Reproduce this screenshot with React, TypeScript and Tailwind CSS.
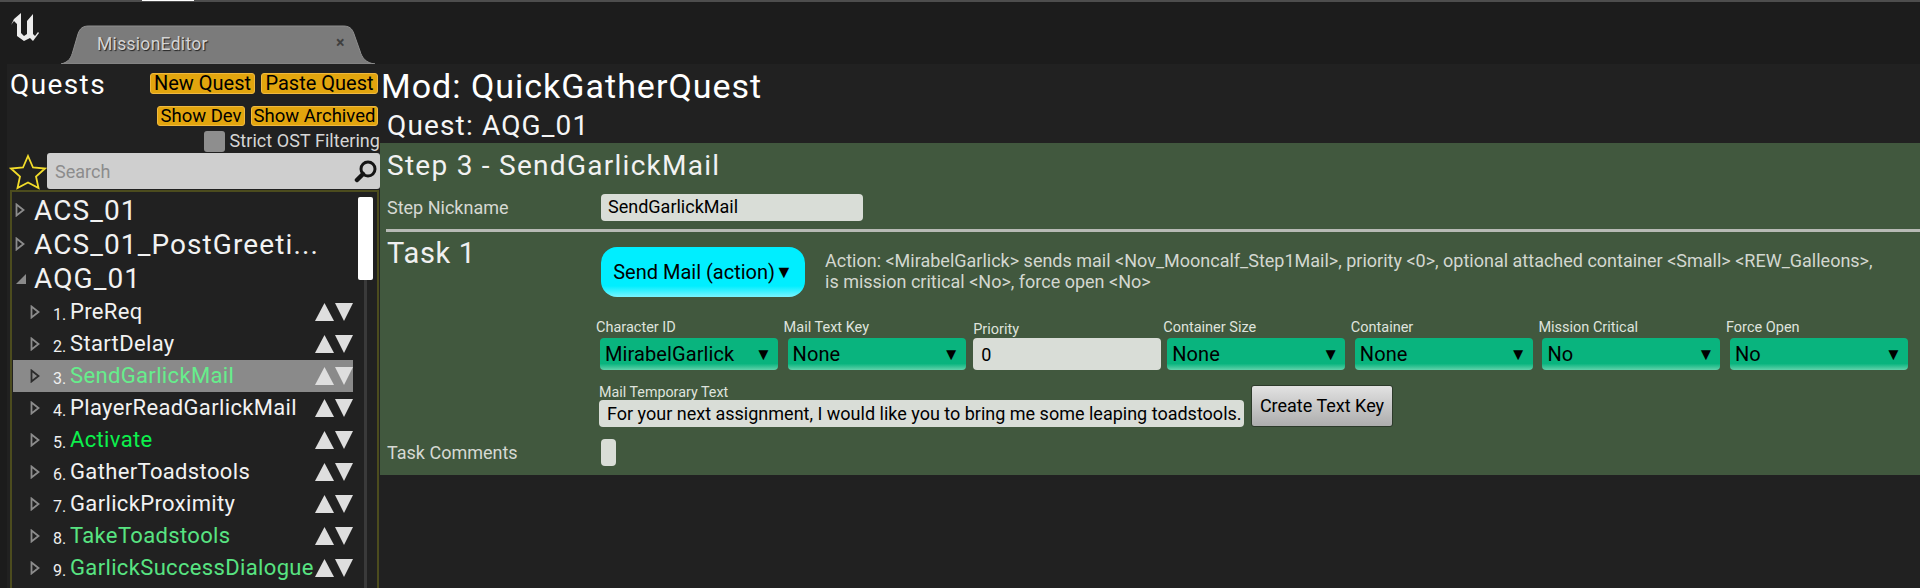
import React from 'react';

const steps = [
  { n: 1, name: 'PreReq', color: 'text-[#f2f2f2]' },
  { n: 2, name: 'StartDelay', color: 'text-[#f2f2f2]' },
  { n: 3, name: 'SendGarlickMail', color: 'text-[#66ee8c]', selected: true },
  { n: 4, name: 'PlayerReadGarlickMail', color: 'text-[#f2f2f2]' },
  { n: 5, name: 'Activate', color: 'text-[#0cf04c]' },
  { n: 6, name: 'GatherToadstools', color: 'text-[#f2f2f2]' },
  { n: 7, name: 'GarlickProximity', color: 'text-[#f2f2f2]' },
  { n: 8, name: 'TakeToadstools', color: 'text-[#58e481]' },
  { n: 9, name: 'GarlickSuccessDialogue', color: 'text-[#58e481]' },
];

const fields = [
  { label: 'Character ID', value: 'MirabelGarlick' },
  { label: 'Mail Text Key', value: 'None' },
  { label: 'Priority', value: '0', input: true },
  { label: 'Container Size', value: 'None' },
  { label: 'Container', value: 'None' },
  { label: 'Mission Critical', value: 'No' },
  { label: 'Force Open', value: 'No' },
];

const OrangeButton = ({ label, className }: { label: string; className: string }) => (
  <div className={`flex items-center justify-center rounded-[3px] border border-[#f0b93f] bg-[#e2a50e] leading-none text-black ${className}`}>
    {label}
  </div>
);

const Caret = ({ open, dark }: { open?: boolean; dark?: boolean }) =>
  open ? (
    <svg width="12" height="12" viewBox="0 0 12 12" className="shrink-0">
      <path d="M1 11 L11 1 L11 11 Z" fill="#8a8a8a" />
    </svg>
  ) : (
    <svg width="10" height="14" viewBox="0 0 10 14" className="shrink-0">
      <path d="M1.5 1.5 L8.5 7 L1.5 12.5 Z" fill="none" stroke={dark ? '#2c2c2c' : '#8c8c8c'} strokeWidth="1.8" />
    </svg>
  );

const MoveArrows = () => (
  <div className="flex shrink-0 gap-px">
    <svg width="19" height="18" viewBox="0 0 19 18">
      <path d="M9.5 0 L19 18 L0 18 Z" fill="#dedede" />
    </svg>
    <svg width="18" height="18" viewBox="0 0 18 18">
      <path d="M0 0 L18 0 L9 18 Z" fill="#dedede" />
    </svg>
  </div>
);

const TreeRoot = ({ label, open }: { label: string; open?: boolean }) => (
  <div className="flex h-[34.4px] items-center">
    <div className="flex w-[21px] justify-start pl-[2px]">
      <Caret open={open} />
    </div>
    <span className="mt-[1px] text-[28px] leading-none tracking-[1.1px] text-[#f2f2f2]">{label}</span>
  </div>
);

const StepRow = ({ n, name, color, selected }: { n: number; name: string; color: string; selected?: boolean }) => (
  <div className={`flex h-[32px] items-center ${selected ? 'bg-[#8a8a8a]' : ''}`}>
    <div className="flex w-[40px] justify-end pr-[13px] pl-[17px]">
      <Caret dark={selected} />
    </div>
    <span className="mt-[5px] w-[17px] text-[16px] leading-none text-[#f0f0f0]">{n}.</span>
    <span className={`min-w-0 flex-1 whitespace-nowrap text-[22px] leading-none tracking-[0.35px] ${color}`}>{name}</span>
    <MoveArrows />
  </div>
);

const Sidebar = () => (
  <div className="flex w-[373px] shrink-0 flex-col">
    <div className="flex h-[35px] items-center pt-[3px]">
      <span className="mt-[4px] ml-[3px] text-[28px] leading-none tracking-[1.4px] text-white">Quests</span>
      <OrangeButton label="New Quest" className="ml-auto h-[21px] w-[105px] text-[20px]" />
      <OrangeButton label="Paste Quest" className="mr-[2px] ml-[6px] h-[21px] w-[117px] text-[20px]" />
    </div>
    <div className="mt-[7px] flex h-[24px] justify-end pr-[2px]">
      <OrangeButton label="Show Dev" className="h-[20px] w-[88px] text-[18.5px]" />
      <OrangeButton label="Show Archived" className="ml-[6px] h-[20px] w-[127px] text-[18.5px]" />
    </div>
    <div className="flex h-[23px] items-center justify-end">
      <div className="h-[21px] w-[21px] rounded-[3px] bg-[#8e8e8e]" />
      <span className="ml-[5px] text-[18px] leading-none tracking-[0.05px] whitespace-nowrap text-[#d6d6d6]">Strict OST Filtering</span>
    </div>
    <div className="flex h-[37px] items-center">
      <svg width="38" height="37" viewBox="0 0 38 37" className="ml-[2px] shrink-0">
        <path
          d="M19 3 L24 14.5 L36 15.5 L27 23.5 L29.5 35 L19 29.5 L8.5 35 L11 23.5 L2 15.5 L14 14.5 Z"
          fill="none"
          stroke="#f2dc2a"
          strokeWidth="1.8"
        />
      </svg>
      <div className="flex h-[36px] flex-1 items-center justify-between rounded-[3px] bg-[#cfcfcf] pr-[2px] pl-[8px]">
        <span className="text-[18px] text-[#8c8c8c]">Search</span>
        <svg width="24" height="24" viewBox="0 0 24 24">
          <circle cx="14" cy="10" r="7" fill="none" stroke="#151515" strokeWidth="3" />
          <path d="M9 15 L3 21" stroke="#151515" strokeWidth="4.5" strokeLinecap="round" />
        </svg>
      </div>
    </div>
    <div className="relative mr-[1px] ml-[3px] h-[399px] overflow-hidden border-x-2 border-t-2 border-[#4c4c1e] pt-[1px] pl-px">
      <div className="absolute top-[5px] right-[4px] h-[83px] w-[15px] rounded-[2px] bg-white" />
      <div className="absolute top-[88px] right-[10px] bottom-0 w-[3px] bg-[#3a3a3a]" />
      <div className="w-[340px]">
        <TreeRoot label="ACS_01" />
        <TreeRoot label="ACS_01_PostGreeti..." />
        <TreeRoot label="AQG_01" open />
        {steps.map((s) => (
          <StepRow key={s.n} {...s} />
        ))}
      </div>
    </div>
  </div>
);

const Combo = ({ value }: { value: string }) => (
  <div className="flex h-[32px] items-center justify-between rounded-[4px] bg-[linear-gradient(#09b47e_80%,#62d2ab)] pr-[6px] pl-[5px] text-[20px] leading-none tracking-[0.1px] text-black">
    <span>{value}</span>
    <span className="text-[17px]">▼</span>
  </div>
);

const FieldCol = ({ label, value, input }: { label: string; value: string; input?: boolean }) => (
  <div className={`flex shrink-0 flex-col ${input ? 'w-[192px]' : 'w-[187.6px]'}`}>
    <div className={`flex h-[35px] text-[14.5px] leading-none text-[#dfe3dd] ${input ? 'items-end pb-[1px] pl-[2px]' : 'items-start pt-[18px]'}`}>
      {label}
    </div>
    <div className="ml-[4px] w-[178px]">
      {input ? (
        <div className="-ml-[2px] flex h-[32px] w-[188px] items-center rounded-[4px] bg-[#d9ddd7] pl-[8px] text-[18px] text-black">{value}</div>
      ) : (
        <Combo value={value} />
      )}
    </div>
  </div>
);

const MainPanel = () => (
  <div className="flex min-w-0 flex-1 flex-col">
    <div className="flex h-[41px] items-center pt-[3px] pl-[1px] text-[34px] leading-none tracking-[1px] text-white">Mod: QuickGatherQuest</div>
    <div className="flex h-[38px] items-center pt-[3px] pl-[7px] text-[28px] leading-none tracking-[1.15px] text-[#f5f5f5]">Quest: AQG_01</div>
    <div className="flex h-[332px] flex-col bg-[#41583e]">
      <div className="flex h-[46px] items-center pl-[7px] text-[28px] leading-none tracking-[1.27px] text-[#f2f2f2]">Step 3 - SendGarlickMail</div>
      <div className="flex h-[36px] items-center pl-[7px]">
        <span className="mt-[2px] w-[214px] text-[18px] leading-none text-[#d6d9d3]">Step Nickname</span>
        <div className="flex h-[27px] w-[262px] items-center rounded-[4px] bg-[#d9ddd7] pl-[7px] text-[18px] leading-none text-black">SendGarlickMail</div>
      </div>
      <div className="mt-[4px] ml-[6px] h-[3px] bg-[#b7bab5]" />
      <div className="flex h-[65px] pt-[15px] pl-[7px]">
        <span className="-mt-[11px] w-[214px] text-[29px] leading-[34px] tracking-[0.7px] text-[#f0f0f0]">Task 1</span>
        <div className="flex h-[50px] w-[204px] items-center justify-center rounded-[16px] bg-[linear-gradient(#00eeff_78%,#7af4ff)] text-[20px] leading-none text-black">
          Send Mail (action)<span className="text-[18px]">▼</span>
        </div>
        <p className="mt-[3px] ml-[20px] w-[1080px] text-[18px] leading-[21px] text-[#d3d7d0]">
          Action: &lt;MirabelGarlick&gt; sends mail &lt;Nov_Mooncalf_Step1Mail&gt;, priority &lt;0&gt;, optional attached container &lt;Small&gt; &lt;REW_Galleons&gt;,
          <br />
          is mission critical &lt;No&gt;, force open &lt;No&gt;
        </p>
      </div>
      <div className="mt-[6px] flex pl-[216px]">
        {fields.map((f) => (
          <FieldCol key={f.label} {...f} />
        ))}
      </div>
      <div className="mt-[15px] flex items-end pl-[219px]">
        <div className="w-[645px] shrink-0">
          <div className="text-[14.3px] leading-[15px] text-[#dfe3dd]">Mail Temporary Text</div>
          <div className="flex h-[27px] items-center rounded-[4px] bg-[#d9ddd7] pl-[8px] text-[18px] leading-none whitespace-nowrap text-black">
            For your next assignment, I would like you to bring me some leaping toadstools.
          </div>
        </div>
        <div className="ml-[7px] flex h-[42px] w-[142px] items-center justify-center rounded-[3px] border border-[#2c3a2a] bg-[linear-gradient(#e2e2e2,#adadad)] text-[18px] leading-none text-black">
          Create Text Key
        </div>
      </div>
      <div className="mt-[12px] flex items-center pl-[7px]">
        <span className="w-[214px] text-[18px] leading-none text-[#d6d9d3]">Task Comments</span>
        <div className="h-[27px] w-[15px] rounded-[4px] bg-[#d9ddd7]" />
      </div>
    </div>
  </div>
);

export default function App() {
  return (
    <div className="flex h-[588px] w-[1920px] flex-col overflow-hidden bg-[#1c1c1c] font-[Roboto,sans-serif]">
      <div className="flex h-[2px] shrink-0 bg-[#4d4d4d]">
        <div className="ml-[142px] h-[1px] w-[52px] bg-white" />
      </div>
      <div className="flex h-[62px] shrink-0">
        <svg width="30" height="30" viewBox="0 0 30 30" className="mt-[10px] ml-[10px] shrink-0">
          <path
            d="M1 13 L4 7 L11 1 L11 6 L11 21 L14 24 L17 22 L17 9 L23 2 L23 22 L25 24 L28 20 L29 21 L23 29 L20 26 L14 29 L7 24 L7 12 L4 9 Z"
            fill="#ececec"
          />
        </svg>
        <div className="relative mt-[23px] ml-[21px] flex h-[39px] w-[315px] items-center">
          <svg width="315" height="39" viewBox="0 0 315 39" className="absolute inset-0">
            <path
              d="M0 39 C8 37 10 33 12 26 L17 9 C19 3 22 1 28 1 L282 1 C288 1 291 3 293 9 L299 26 C301 33 305 38 314 39 Z"
              fill="#7b7b7b"
              stroke="#8f8f8f"
            />
          </svg>
          <span className="relative ml-[36px] text-[17.5px] leading-none tracking-[0.3px] text-[#d4d4d4] [text-shadow:1px_1px_1px_#222]">MissionEditor</span>
          <span className="absolute top-[10px] left-[275px] text-[16px] leading-none font-bold text-[#3f3f3f]">×</span>
        </div>
      </div>
      <div className="ml-[7px] flex min-h-0 flex-1 bg-[#212121]">
        <Sidebar />
        <MainPanel />
      </div>
    </div>
  );
}
